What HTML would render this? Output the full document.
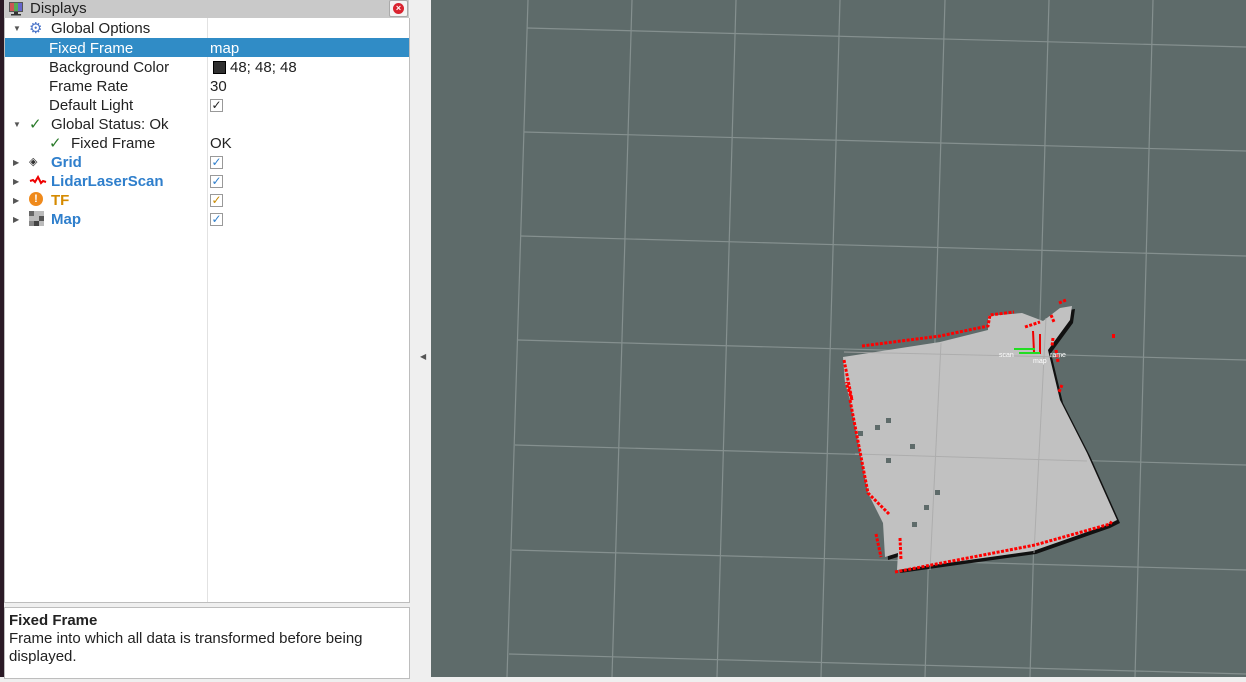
<!DOCTYPE html>
<html><head><meta charset="utf-8"><style>
html,body{margin:0;padding:0;width:1246px;height:677px;overflow:hidden;background:#efefef;font-family:"Liberation Sans","DejaVu Sans",sans-serif;}
.strip{position:absolute;left:0;top:0;width:4px;height:677px;background:#2b1a26;}
.panel{position:absolute;left:4px;top:0;width:405px;height:677px;background:#efefef;}
.title{position:absolute;left:0;top:0;width:405px;height:18px;background:#c9c9c9;font-size:15px;line-height:17px;}
.title span{position:absolute;left:26px;top:0;color:#222;}
.tree{position:absolute;left:0;top:18px;width:404px;height:584px;background:#fff;border:1px solid #bdbdbd;border-top:none;}
.col{position:absolute;left:202px;top:0;width:1px;height:584px;background:#e2e2e2;}
.row{position:absolute;left:0;width:404px;height:19px;font-size:15px;line-height:21px;color:#222;}
.row .a{position:absolute;}
.row .b{position:absolute;left:205px;}
.sel{background:#308cc6;color:#fff;}
.blue{color:#2f7fcc;font-weight:bold;}
.orange{color:#d58a00;font-weight:bold;}
.arr{position:absolute;left:8px;top:0;font-size:8px;color:#555;}
.cb{position:absolute;left:205px;top:4px;width:11px;height:11px;border:1px solid #999;background:#fff;font-size:12px;line-height:11px;text-align:center;}
.desc{position:absolute;left:0;top:607px;width:404px;height:70px;background:#fff;border:1px solid #bdbdbd;font-size:15px;line-height:18px;color:#222;}
.view{position:absolute;left:431px;top:0;width:815px;height:677px;background:#5e6b6a;}
</style></head><body>
<div class="strip"></div>
<div class="panel">
 <div class="title">
  <svg style="position:absolute;left:4px;top:1px" width="16" height="15"><rect x="1" y="1" width="14" height="10" fill="#555"/><rect x="2" y="2" width="4" height="8" fill="#c55"/><rect x="6" y="2" width="4" height="8" fill="#5a5"/><rect x="10" y="2" width="4" height="8" fill="#66c"/><rect x="6" y="11" width="4" height="2" fill="#333"/><rect x="3" y="13" width="10" height="1.5" fill="#333"/></svg>
  <span>Displays</span>
  <div style="position:absolute;left:385px;top:0;width:17px;height:15px;background:#f4f4f4;border:1px solid #aaa;border-radius:2px"><div style="position:absolute;left:3px;top:2px;width:11px;height:11px;border-radius:50%;background:#d9232f;color:#fff;font-size:9px;line-height:11px;text-align:center;font-weight:bold">×</div></div>
 </div>
 <div class="tree">
  <div class="col"></div>
  <div class="row" style="top:0"><span class="arr">▼</span><span class="a" style="left:24px;color:#4a74c9">⚙</span><span class="a" style="left:46px">Global Options</span></div>
  <div class="row sel" style="top:20px"><span class="a" style="left:44px">Fixed Frame</span><span class="b">map</span></div>
  <div class="row" style="top:39px"><span class="a" style="left:44px">Background Color</span><span style="position:absolute;left:208px;top:4px;width:11px;height:11px;background:#303030;border:1px solid #000"></span><span class="b" style="left:225px">48; 48; 48</span></div>
  <div class="row" style="top:58px"><span class="a" style="left:44px">Frame Rate</span><span class="b">30</span></div>
  <div class="row" style="top:77px"><span class="a" style="left:44px">Default Light</span><span class="cb">✓</span></div>
  <div class="row" style="top:96px"><span class="arr">▼</span><span class="a" style="left:24px;color:#2a7a2a">✓</span><span class="a" style="left:46px">Global Status: Ok</span></div>
  <div class="row" style="top:115px"><span class="a" style="left:44px;color:#2a7a2a">✓</span><span class="a" style="left:66px">Fixed Frame</span><span class="b">OK</span></div>
  <div class="row" style="top:134px"><span class="arr">▶</span><span class="a" style="left:24px;font-size:11px;color:#333">◈</span><span class="a blue" style="left:46px">Grid</span><span class="cb" style="color:#2f7fcc">✓</span></div>
  <div class="row" style="top:153px"><span class="arr">▶</span><svg class="a" style="left:24px;top:4px" width="18" height="10"><path d="M1 6 L4 5 L6 7 L9 2 L12 8 L14 6 L17 7" stroke="#e00" stroke-width="2" fill="none"/></svg><span class="a blue" style="left:46px">LidarLaserScan</span><span class="cb" style="color:#2f7fcc">✓</span></div>
  <div class="row" style="top:172px"><span class="arr">▶</span><span style="position:absolute;left:24px;top:2px;width:14px;height:14px;border-radius:50%;background:#ef8a1c;color:#fff;font-size:11px;line-height:14px;text-align:center;font-weight:bold">!</span><span class="a orange" style="left:46px">TF</span><span class="cb" style="color:#c88a00">✓</span></div>
  <div class="row" style="top:191px"><span class="arr">▶</span><svg class="a" style="left:24px;top:2px" width="15" height="15"><rect width="15" height="15" fill="#bbb"/><rect x="0" y="0" width="5" height="5" fill="#666"/><rect x="10" y="5" width="5" height="5" fill="#555"/><rect x="5" y="10" width="5" height="5" fill="#444"/><rect x="0" y="10" width="5" height="5" fill="#888"/></svg><span class="a blue" style="left:46px">Map</span><span class="cb" style="color:#2f7fcc">✓</span></div>
 </div>
 <div class="desc"><div style="position:absolute;left:4px;top:4px"><b>Fixed Frame</b><br>Frame into which all data is transformed before being<br>displayed.</div></div>
</div>
<div style="position:absolute;left:420px;top:352px;font-size:8px;color:#555">◀</div>
<div class="view">
<svg width="815" height="677" viewBox="431 0 815 677">
 <g stroke="#85908f" stroke-width="1.2">
  <line x1="528" y1="0" x2="507" y2="677"/><line x1="632" y1="0" x2="612" y2="677"/><line x1="736" y1="0" x2="717" y2="677"/><line x1="840" y1="0" x2="821" y2="677"/><line x1="945" y1="0" x2="925" y2="677"/><line x1="1049" y1="0" x2="1030" y2="677"/><line x1="1153" y1="0" x2="1135" y2="677"/>
  <line x1="527" y1="28" x2="1246" y2="47"/><line x1="524" y1="132" x2="1246" y2="151"/><line x1="521" y1="236" x2="1246" y2="256"/><line x1="518" y1="340" x2="1246" y2="360"/><line x1="515" y1="445" x2="1246" y2="465"/><line x1="512" y1="550" x2="1246" y2="570"/><line x1="509" y1="654" x2="1246" y2="674"/>
 </g>
 <polygon transform="translate(3,3)" points="843,357 940,342 988,330 988,316 1022,313 1043,321 1060,308 1072,306 1070,320 1048,350 1060,400 1087,453 1117,520 1107,525 1033,551 897,570 898,553 885,557 883,523 868,493 850,400 845,383" fill="#111"/>
 <polygon points="843,357 940,342 988,330 988,316 1022,313 1043,321 1060,308 1072,306 1070,320 1048,350 1060,400 1087,453 1117,520 1107,525 1033,551 897,570 898,553 885,557 883,523 868,493 850,400 845,383" fill="#c1c1c1"/>
 <g fill="#5e6b6a"><rect x="886" y="418" width="5" height="5"/><rect x="875" y="425" width="5" height="5"/><rect x="910" y="444" width="5" height="5"/><rect x="886" y="458" width="5" height="5"/><rect x="935" y="490" width="5" height="5"/><rect x="924" y="505" width="5" height="5"/><rect x="912" y="522" width="5" height="5"/><rect x="871" y="512" width="5" height="5"/><rect x="858" y="431" width="5" height="5"/></g>
 <g stroke="#a9a9a9" stroke-width="1" opacity="0.8"><line x1="941" y1="343" x2="930" y2="570"/><line x1="1046" y1="318" x2="1034" y2="553"/><line x1="844" y1="352" x2="1060" y2="357"/><line x1="855" y1="454" x2="1087" y2="461"/></g>
 <g fill="none" stroke="#f00" stroke-width="3" stroke-dasharray="3 1.5">
  <polyline points="844,360 852,400 846,382"/>
  <polyline points="850,400 868,493 889,514"/>
  <polyline points="862,346 940,336 988,326 990,315 1014,312"/>
  <polyline points="895,572 1035,545 1110,524 1112,521"/>
  <polyline points="876,534 881,557"/><polyline points="900,538 901,560"/>
  <polyline points="1025,327 1040,322"/><polyline points="1059,303 1066,300"/><polyline points="1051,315 1054,322"/><polyline points="1056,350 1058,362"/><polyline points="1062,385 1059,392"/><polyline points="1053,338 1052,346"/>
 </g>
 <rect x="1112" y="334" width="3" height="4" fill="#f00"/>
 <line x1="1033" y1="331" x2="1034" y2="352" stroke="#e00" stroke-width="2"/><line x1="1040" y1="334" x2="1040" y2="354" stroke="#e00" stroke-width="2"/>
 <line x1="1014" y1="349" x2="1035" y2="349" stroke="#2d2" stroke-width="2"/><line x1="1019" y1="353" x2="1040" y2="353" stroke="#2d2" stroke-width="2"/>
 <text x="999" y="357" font-size="7" fill="#fff" font-family="Liberation Sans,sans-serif">scan</text><text x="1050" y="357" font-size="7" fill="#fff" font-family="Liberation Sans,sans-serif">rame</text><text x="1033" y="363" font-size="7" fill="#fff" font-family="Liberation Sans,sans-serif">map</text>
</svg>
</div>
</body></html>
